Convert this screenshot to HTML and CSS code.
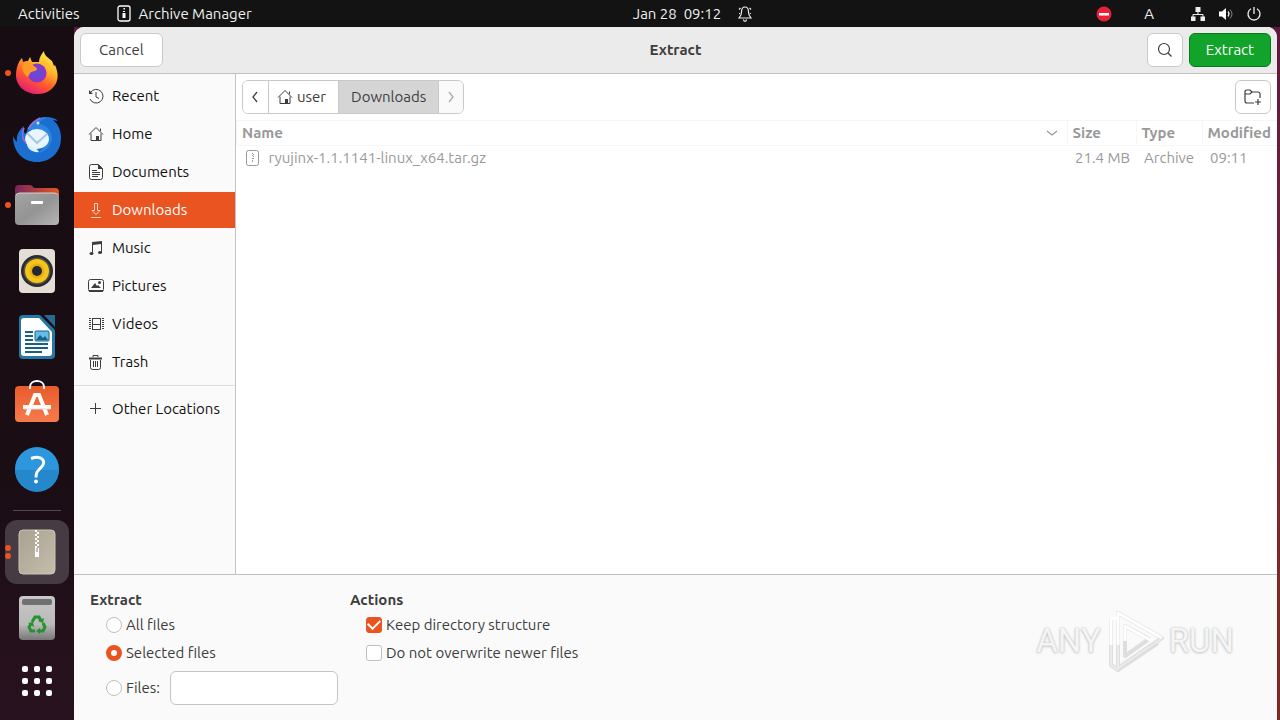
FILE: index.html
```
<!DOCTYPE html>
<html lang="en">
<head>
  <meta charset="UTF-8" />
  <meta name="viewport" content="width=device-width, initial-scale=1.0"/>
  <title>Extract</title>
  <link rel="stylesheet" href="styles.css">
</head>
<body>
  <svg class="defs" width="0" height="0" aria-hidden="true">
    <symbol id="home" viewBox="0 0 16 16">
      <path d="M1 8.5 8 1.5l7 7M3 7.500v7h10v-7M12.500 5V2.500" fill="none" stroke="currentColor"/>
      <path d="M8 10h3v5H8z" fill="currentColor"/>
    </symbol>
    <symbol id="archive" viewBox="0 0 16 16">
      <rect x="1.500" y=".5" width="12" height="15" rx="2" fill="none" stroke="currentColor"/>
      <path d="M7 3h1v1H7zM8 4h1v1H8zM7 5h1v1H7zM8 6h1v1H8zM7 8h2v1H7zM7 10h1v2H7z" fill="currentColor"/>
    </symbol>
  </svg>

  <header class="topbar">
    <div class="topbar-left">
      <button class="bar-btn">Activities</button>
      <button class="bar-btn app-menu">
        <svg width="16" height="18" viewBox="0 0 16 18"><rect x="2" y="1" width="12" height="15" rx="2" fill="none" stroke="#fff" stroke-width="1.300"/><path d="M7.500 3h1.500v1.500H7.500zM7 6h2v1H7zM6.500 8h3v5h-3z" fill="#fff"/></svg>
        Archive Manager
      </button>
    </div>
    <button class="bar-btn clock">
      <span>Jan 28&nbsp; 09:12</span>
      <svg width="16" height="18" viewBox="0 0 16 18" fill="none" stroke="#eee" stroke-width="1.200"><path d="M8 2C5 2 4.500 4 4.500 7 4.500 10 3.500 11 2 13h12c-1.500-2-2.500-3-2.500-6C11.500 4 11 2 8 2zM6.500 14.500c0 2.500 3 2.500 3 0M2 4.500 3.500 3M14 4.500 12.500 3M2 8.500h1M14 8.500h-1"/></svg>
    </button>
    <div class="topbar-right">
      <svg class="busy" width="16" height="16" viewBox="0 0 16 16"><circle cx="8" cy="8" r="7.500" fill="#e8203c"/><path d="M3 7h10v2.500H3z" fill="#fff"/></svg>
      <span class="layout">A</span>
      <svg width="16" height="16" viewBox="0 0 16 16" fill="#eee"><path d="M5.500 1h5v5h-5zM1 10.500h4.500V15H1zM10.500 10.500H15V15h-4.500z"/><path d="M8 6v2M3 11V8.500h10V11" fill="none" stroke="#eee"/></svg>
      <svg width="16" height="16" viewBox="0 0 16 16"><path d="M1 5.500h3L8 2v12l-4-3.500H1z" fill="#fff"/><path d="M10 5.500q2 2.500 0 5" fill="none" stroke="#eee" stroke-width="1.300"/><path d="M12 3.500q4 4.500 0 9" fill="none" stroke="#888"/></svg>
      <svg width="16" height="16" viewBox="0 0 16 16" fill="none" stroke="#eee" stroke-width="1.300"><path d="M8 1v7M5 2.800a6 6 0 1 0 6 0"/></svg>
    </div>
  </header>

  <div class="desktop">
    <nav class="dock" aria-label="Dock">
      <button class="dock-item one" aria-label="Firefox">
        <svg width="48" height="48" viewBox="0 0 48 48">
          <defs>
            <linearGradient id="fox" x1="0.800" y1="0" x2="0.250" y2="1"><stop offset="0" stop-color="#fff44f"/><stop offset=".35" stop-color="#ffb62b"/><stop offset=".65" stop-color="#ff5a2c"/><stop offset="1" stop-color="#e3167f"/></linearGradient>
            <radialGradient id="globe"><stop offset="0" stop-color="#5b50dd"/><stop offset="1" stop-color="#8e35c5"/></radialGradient>
          </defs>
          <path d="M6 13c1-2 2-3 3-4l1 4c2-1 4-1 5-1l2-4 2 5 7 0c0-4 2-7 5-11 0 5 5 7 8 10l2 5 1-1c3 7 4 14 0 20-4 6-10 9-17 9C12 45 3 37 3 26c0-5 1-9 3-13z" fill="url(#fox)"/>
          <path d="M25 14c7-1 12 5 10 13 3-4 3-9 0-13-3-3-7-3-10 0z" fill="#ffbd30"/>
          <circle cx="24" cy="24" r="9.500" fill="url(#globe)"/>
          <path d="M9 17c4-3 8-3 11-1 1 2 4 2 4 4 0 2-4 2-6 3-1 1-2 3-3 5-3-2-6-6-6-11z" fill="#ff9a28"/>
        </svg>
      </button>
      <button class="dock-item" aria-label="Thunderbird">
        <svg width="50" height="48" viewBox="0 0 50 48">
          <path d="M1 21c1 3 3 5 4 6-1-7 2-12 7-16-1 4 0 7 2 8C17 8 24 2 34 2c5 0 9 1 12 4l-5-1 4 4c3 5 4 9 4 14 0 14-10 24-24 24C11 47 1 37 1 21z" fill="#1b6fd0"/>
          <path d="M16 14C21 5 28 1 35 3c-5 1-8 4-9 6 8 0 14 7 14 15-2 8-7 13-14 14 5-3 6-6 6-10z" fill="#2c86e0"/>
          <ellipse cx="25" cy="24" rx="12" ry="10" fill="#e9f5ff"/>
          <path d="m15 18 10 10 10-9" fill="none" stroke="#a9c7df" stroke-width="2"/>
          <path d="M15 29c0 4 5 9 12 8l-3-4z" fill="#dff0ff"/>
          <path d="M12 13c-3 7-1 12 2 15M16 14c4-7 8-9 12-11" fill="none" stroke="#9b6ae0" stroke-width="1.500"/>
          <circle cx="26" cy="8" r="1.500" fill="#c9e6ff"/>
        </svg>
      </button>
      <button class="dock-item one" aria-label="Files">
        <svg width="48" height="48" viewBox="0 0 48 48">
          <defs><linearGradient id="tab"><stop offset="0" stop-color="#75285f"/><stop offset="1" stop-color="#e95420"/></linearGradient><linearGradient id="folder" x2="1" y2="1"><stop offset="0" stop-color="#a4a4a4"/><stop offset=".5" stop-color="#949494"/><stop offset="1" stop-color="#b5b5b5"/></linearGradient></defs>
          <path d="M2 8q0-4 4-4h11q2 0 4 3h21q4 0 4 4v20H2z" fill="url(#tab)"/>
          <rect x="2" y="12" width="44" height="32" rx="4" fill="url(#folder)"/>
          <path d="M3 14q1-2 4-2h34q3 0 4 2" fill="none" stroke="#d0d0d0"/>
          <rect x="18" y="20" width="12" height="3" rx="1" fill="#fff"/>
        </svg>
      </button>
      <button class="dock-item" aria-label="Rhythmbox">
        <svg width="48" height="48" viewBox="0 0 48 48"><rect x="6" y="2" width="36" height="44" rx="4" fill="#e4dfd5"/><circle cx="24" cy="24" r="16" fill="#282b32"/><circle cx="24" cy="24" r="13.500" fill="#5a5340"/><circle cx="24" cy="24" r="12" fill="#f6c51b"/><circle cx="24" cy="24" r="7.500" fill="#e5ae15"/><circle cx="24" cy="24" r="5" fill="#252830"/></svg>
      </button>
      <button class="dock-item" aria-label="LibreOffice Writer">
        <svg width="48" height="48" viewBox="0 0 48 48"><path d="M10 2h17l15 15v25q0 4-4 4H10q-4 0-4-4V6q0-4 4-4z" fill="#2478a5"/><path d="M31 2h11v12z" fill="#256b94"/><path d="M11 5h15l13 14v21q0 3-3 3H11q-3 0-3-3V8q0-3 3-3z" fill="#fff"/><path d="M12 19h8M12 23h8M12 27h8M12 31h23M12 35h23M12 39h17" stroke="#176086" stroke-width="2"/><rect x="22" y="18" width="14" height="10" rx="1" fill="#65bee8" stroke="#176086"/><path d="m23 27 4-5 3 3 2-2 3 4z" fill="#176086"/></svg>
      </button>
      <button class="dock-item" aria-label="Ubuntu Software">
        <svg width="48" height="48" viewBox="0 0 48 48"><defs><linearGradient id="bag" x2="0" y2="1"><stop offset="0" stop-color="#e95b2b"/><stop offset="1" stop-color="#f77b4d"/></linearGradient></defs><rect x="2" y="7" width="44" height="36" rx="4" fill="url(#bag)"/><path d="M17 10V8c0-8 14-8 14 0v2" fill="none" stroke="#fff" stroke-width="2"/><path d="m14 36 8-20h4l8 20M10 28h28" fill="none" stroke="#fff" stroke-width="4"/><path d="M11 30h26" stroke="#ddd"/></svg>
      </button>
      <button class="dock-item" aria-label="Help">
        <svg width="48" height="48" viewBox="0 0 48 48"><circle cx="24" cy="24" r="22" fill="#2d96dc"/><path d="M2 25h44a22 22 0 0 1-44 0z" fill="#2588cb"/><path d="M18 13.500c11-4 16 3 10 9-4 4-5 5-5 10" fill="none" stroke="#fff" stroke-width="3"/><circle cx="23" cy="36.500" r="2" fill="#fff"/></svg>
      </button>
      <hr class="dock-line">
      <button class="dock-item current" aria-label="Archive Manager">
        <svg width="48" height="48" viewBox="0 0 48 48"><defs><linearGradient id="zip" x2="1" y2="1"><stop offset="0" stop-color="#aaa190"/><stop offset="1" stop-color="#c5bead"/></linearGradient></defs><rect x="6" y="2" width="36" height="44" rx="4" fill="url(#zip)" stroke="#cbc3b3"/><path d="M23 2v18" stroke="#fff" stroke-width="2" stroke-dasharray="2 2"/><path d="M25 4v16" stroke="#fff" stroke-width="2" stroke-dasharray="2 2"/><path d="M22 20h4v9h-4z" fill="#fff"/><path d="M24 20v4" stroke="#777"/></svg>
      </button>
      <button class="dock-item" aria-label="Trash">
        <svg width="48" height="48" viewBox="0 0 48 48"><defs><linearGradient id="bin" x2="0" y2="1"><stop offset="0" stop-color="#c8c8c8"/><stop offset=".65" stop-color="#b9b9b9"/><stop offset="1" stop-color="#777"/></linearGradient></defs><rect x="6" y="2" width="36" height="44" rx="4" fill="url(#bin)"/><rect x="9" y="5" width="30" height="6" rx="2" fill="#707070"/><path d="m19 28 3-5h4l2 4M30 29l2 4-2 4h-4M22 37h-4l-2-4 2-3" fill="none" stroke="#26922d" stroke-width="3"/><path d="m25 27 5 2 1-5zM27 34v6l-4-3zM15 29l5-1 1 5z" fill="#26922d"/></svg>
      </button>
      <button class="dock-item apps" aria-label="Show Applications">
        <svg width="48" height="48" viewBox="0 0 48 48" fill="#fff"><rect x="9" y="9" width="6" height="6" rx="2"/><rect x="21" y="9" width="6" height="6" rx="2"/><rect x="33" y="9" width="6" height="6" rx="2"/><rect x="9" y="21" width="6" height="6" rx="2"/><rect x="21" y="21" width="6" height="6" rx="2"/><rect x="33" y="21" width="6" height="6" rx="2"/><rect x="9" y="33" width="6" height="6" rx="2"/><rect x="21" y="33" width="6" height="6" rx="2"/><rect x="33" y="33" width="6" height="6" rx="2"/></svg>
      </button>
    </nav>

    <main class="window">
      <header class="titlebar">
        <div><button class="btn">Cancel</button></div>
        <h1>Extract</h1>
        <div class="title-actions">
          <button class="btn icon-btn" aria-label="Search"><svg width="16" height="16" viewBox="0 0 16 16" fill="none" stroke="currentColor" stroke-width="1.200"><circle cx="7" cy="7" r="5.500"/><path d="m11 11 3.500 3.500"/></svg></button>
          <button class="btn extract-btn">Extract</button>
        </div>
      </header>

      <div class="chooser">
        <nav class="places" aria-label="Places">
          <a href="#"><svg width="16" height="16" viewBox="0 0 16 16" fill="none" stroke="currentColor"><path d="M2.500 4.500A6.800 6.800 0 1 1 2 11M8 4v5l3 1.500" /><path d="M1 2v4h4z" fill="currentColor" stroke="none"/></svg>Recent</a>
          <a href="#"><svg width="16" height="16"><use href="#home"/></svg>Home</a>
          <a href="#"><svg width="16" height="16" viewBox="0 0 16 16" fill="none" stroke="currentColor"><path d="M3.500 .5h7l4 4v9q0 2-2 2h-9q-2 0-2-2v-11q0-2 2-2zM4 6.500h5M4 8.500h8M4 10.500h8M4 12.500h6"/><path d="M10 0v5h5z" fill="currentColor" stroke="none"/></svg>Documents</a>
          <a href="#" class="active"><svg width="16" height="16" viewBox="0 0 16 16" fill="none" stroke="currentColor"><path d="M6.500 1.500h3v7h2.500L8 12.500l-4-4h2.500zM3 15.500h10"/></svg>Downloads</a>
          <a href="#"><svg width="16" height="16" viewBox="0 0 16 16" fill="currentColor"><path d="M4 2l10-1v12h-1V4L5 5v9H4z"/><ellipse cx="3.500" cy="13.500" rx="2" ry="1.500"/><ellipse cx="12" cy="12.500" rx="2" ry="1.500"/></svg>Music</a>
          <a href="#"><svg width="16" height="16" viewBox="0 0 16 16"><rect x=".5" y="1.500" width="15" height="12" rx="2" fill="none" stroke="currentColor"/><path d="m3 10 4-5 2 3 1-1 3 3zM1 12h14v2H1z" fill="currentColor"/><circle cx="11.500" cy="4.500" r="1.500" fill="currentColor"/></svg>Pictures</a>
          <a href="#"><svg width="16" height="16" viewBox="0 0 16 16" fill="none" stroke="currentColor"><path d="M4.500 2v12M12.500 2v12M4 2.500h9M4 8.500h9M4 13.500h9"/><path d="M2 2v12M15 2v12" stroke-width="2" stroke-dasharray="1 1"/></svg>Videos</a>
          <a href="#"><svg width="16" height="16" viewBox="0 0 16 16" fill="none" stroke="currentColor"><path d="M2.500 6v7.500q0 2 2 2h6q2 0 2-2V6M5.500 7v6M7.500 7v6M9.500 7v6M5 3V1.500h5V3"/><path d="M1 4.500h13" stroke-width="2"/></svg>Trash</a>
          <hr>
          <a href="#"><svg width="16" height="16" viewBox="0 0 16 16" fill="none" stroke="currentColor"><path d="M2 7.500h11M7.500 2v11"/></svg>Other Locations</a>
        </nav>

        <section class="files">
          <div class="pathbar">
            <div class="crumbs">
              <button aria-label="Back"><svg width="13" height="16" viewBox="0 0 13 16" fill="none" stroke="currentColor" stroke-width="1.300"><path d="M8 3 4 8l4 5"/></svg></button>
              <button><svg width="16" height="16"><use href="#home"/></svg>user</button>
              <button class="here">Downloads</button>
              <button aria-label="Forward" disabled><svg width="12" height="16" viewBox="0 0 12 16" fill="none" stroke="currentColor" stroke-width="1.300"><path d="m4 3 4 5-4 5"/></svg></button>
            </div>
            <button class="btn icon-btn" aria-label="Create Folder"><svg width="18" height="16" viewBox="0 0 18 16" fill="none" stroke="currentColor" stroke-width="1.200"><path d="M10 14H3q-2 0-2-2V3q0-2 2-2h3l2 2h6q2 0 2 2v4M1 5h5l2-2M11 13h6M14 10v6"/></svg></button>
          </div>
          <table class="list">
            <thead>
              <tr>
                <th class="name"><div>Name <svg width="12" height="8" viewBox="0 0 12 8" fill="none" stroke="currentColor" stroke-width="1.300"><path d="m1 2 5 4 5-4"/></svg></div></th>
                <th class="size">Size</th>
                <th class="type">Type</th>
                <th class="modified">Modified</th>
              </tr>
            </thead>
            <tbody>
              <tr>
                <td><div><svg width="16" height="16"><use href="#archive"/></svg>ryujinx-1.1.1141-linux_x64.tar.gz</div></td>
                <td>21.4 MB</td>
                <td>Archive</td>
                <td>09:11</td>
              </tr>
            </tbody>
          </table>
        </section>
      </div>

      <form class="options">
        <fieldset>
          <legend>Extract</legend>
          <label><input type="radio" name="range">All files</label>
          <label><input type="radio" name="range" checked>Selected files</label>
          <div class="files-row">
            <label><input type="radio" name="range">Files:</label>
            <input type="text" aria-label="Files">
          </div>
        </fieldset>
        <fieldset>
          <legend>Actions</legend>
          <label><input type="checkbox" checked>Keep directory structure</label>
          <label><input type="checkbox">Do not overwrite newer files</label>
        </fieldset>
      </form>
    </main>
  </div>

  <div class="watermark">
    <span>ANY</span>
    <svg width="60" height="64" viewBox="0 0 60 64" fill="none" stroke-linejoin="round"><path d="M13 4 57 29 13 59zM6 10v46l7 5 40-27M20 17v30l24-17z" stroke="#dedede" stroke-width="4"/><path d="M6 36V10l6-1M13 36V4l44 25M20 32V17l27 15" stroke="#fff" stroke-width="3"/><path d="M13 36v23l43-29M6 36v20l7 5" stroke="#ebebeb" stroke-width="2"/></svg>
    <span>RUN</span>
  </div>
</body>
</html>
```
FILE: styles.css
```
* {
  box-sizing: border-box;
}

body {
  margin: 0;
  min-height: 100vh;
  display: flex;
  flex-direction: column;
  background: linear-gradient(#5d183f, #7b2530 60%, #7b2b20);
  color: #3d3d3d;
  font-family: "Ubuntu", "Noto Sans", sans-serif;
  font-size: 15px;
  line-height: 20px;
}

button, input {
  font: inherit;
  color: inherit;
}

button {
  cursor: pointer;
}

svg {
  display: block;
  flex: none;
}

.defs {
  position: absolute;
}

/* top bar */
.topbar {
  height: 27px;
  display: grid;
  grid-template-columns: 1fr auto 1fr;
  align-items: center;
  background: #131313;
  color: #f0f0f0;
}

.topbar-left {
  display: flex;
  gap: 36px;
  padding-left: 18px;
}

.bar-btn {
  display: flex;
  align-items: center;
  gap: 7px;
  padding: 0;
  border: none;
  background: none;
}

.clock {
  gap: 16px;
  padding-left: 106px;
}

.topbar-right {
  display: flex;
  justify-content: flex-end;
  align-items: center;
  gap: 12px;
  padding-right: 18px;
}

.busy {
  margin-right: 20px;
}

.layout {
  margin-right: 24px;
}

/* dock */
.desktop {
  flex: 1;
  display: flex;
  padding-right: 3px;
}

.dock {
  width: 74px;
  display: flex;
  flex-direction: column;
  align-items: center;
  gap: 2px;
  padding-top: 14px;
  background: linear-gradient(#180c13, #1a0d14 65%, #29121f);
}

.dock-item {
  position: relative;
  width: 64px;
  height: 64px;
  display: flex;
  align-items: center;
  justify-content: center;
  padding: 0;
  border: none;
  border-radius: 12px;
  background: none;
}

.dock-item.current {
  background: #473b43;
}

.one::before, .current::before, .current::after {
  content: "";
  position: absolute;
  left: 0;
  top: 29px;
  width: 6px;
  height: 6px;
  border-radius: 50%;
  background: #e95420;
}

.current::before {
  top: 25px;
}

.current::after {
  top: 33px;
}

.dock-line {
  width: 48px;
  margin: 7px 0;
  border: none;
  border-top: 1px solid #514850;
}

.dock-item.apps {
  height: 58px;
}

/* window */
.window {
  flex: 1;
  min-width: 0;
  display: flex;
  flex-direction: column;
  border-radius: 10px 10px 0 0;
  background: #fafafa;
  overflow: hidden;
}

.titlebar {
  display: grid;
  grid-template-columns: 1fr auto 1fr;
  align-items: center;
  padding: 6px;
  border-bottom: 1px solid #c0c0c0;
  background: #ebebeb;
}

h1 {
  margin: 0;
  font-size: 15px;
}

.title-actions {
  display: flex;
  justify-content: flex-end;
  gap: 6px;
}

.btn {
  height: 34px;
  padding: 0 18px;
  border: 1px solid #c9c9c9;
  border-radius: 6px;
  background: #fff;
}

.icon-btn {
  width: 36px;
  display: grid;
  place-items: center;
  padding: 0;
}

.extract-btn {
  padding: 0 16px;
  border-color: #0b7a1d;
  background: #12a32b;
  color: #fff;
}

.chooser {
  flex: 1;
  display: flex;
}

.places {
  width: 162px;
  display: flex;
  flex-direction: column;
  gap: 2px;
  padding-top: 4px;
  border-right: 1px solid #c4c4c4;
}

.places a {
  height: 36px;
  display: flex;
  align-items: center;
  gap: 8px;
  padding-left: 14px;
  color: #111;
  text-decoration: none;
  white-space: nowrap;
}

.places svg {
  color: #3d3d3d;
}

.places .active {
  background: #e95420;
  color: #fff;
}

.places .active svg {
  color: #fbd5c7;
}

.places hr {
  width: 100%;
  margin: 3px 0;
  border: none;
  border-top: 1px solid #dedede;
}

.files {
  flex: 1;
  background: #fff;
}

.pathbar {
  display: flex;
  justify-content: space-between;
  padding: 6px;
}

.crumbs {
  display: flex;
  border: 1px solid #c9c9c9;
  border-radius: 6px;
  overflow: hidden;
}

.crumbs button {
  height: 32px;
  display: flex;
  align-items: center;
  gap: 4px;
  padding: 0 12px 0 8px;
  border: none;
  border-right: 1px solid #c9c9c9;
  background: #fff;
}

.crumbs button:first-child, .crumbs button:last-child {
  padding: 0 6px;
}

.crumbs button:last-child {
  border-right: none;
  background: #fafafa;
  color: #aaa;
}

.crumbs .here {
  padding: 0 12px;
  background: #d5d5d5;
}

.list {
  width: 100%;
  border-collapse: collapse;
  table-layout: fixed;
  color: #999;
}

.list th {
  height: 25px;
  padding: 0 0 0 5px;
  border: 1px solid #f6f6f6;
  border-width: 1px 0 1px 1px;
  text-align: left;
}

.list td {
  height: 24px;
  padding: 0 0 0 8px;
  white-space: nowrap;
}

.list th div, .list td div {
  display: flex;
  align-items: center;
}

.list th div {
  justify-content: space-between;
  padding-right: 9px;
}

.list td div {
  gap: 8px;
}

.size {
  width: 69px;
}

.type {
  width: 66px;
}

.modified {
  width: 75px;
}

/* extract options */
.options {
  display: flex;
  gap: 12px;
  height: 146px;
  padding: 15px 16px 0;
  border-top: 1px solid #c0c0c0;
}

fieldset {
  display: flex;
  flex-direction: column;
  gap: 8px;
  margin: 0;
  padding: 0 0 0 16px;
  border: none;
}

legend {
  margin: 0 0 5px -16px;
  padding: 0;
  font-weight: bold;
}

label {
  display: flex;
  align-items: center;
  gap: 4px;
}

input[type="radio"], input[type="checkbox"] {
  appearance: none;
  width: 16px;
  height: 16px;
  margin: 0;
  border: 1px solid #bfbfbf;
  border-radius: 50%;
  background: #fff;
}

input[type="checkbox"] {
  border-radius: 3px;
}

input[type="radio"]:checked {
  border: 5px solid #e95420;
}

input[type="checkbox"]:checked {
  display: grid;
  place-items: center;
  border-color: #e95420;
  background: #e95420;
}

input[type="checkbox"]:checked::before {
  content: "";
  width: 10px;
  height: 6px;
  margin-bottom: 4px;
  border: solid #fff;
  border-width: 0 0 2px 2px;
  transform: rotate(-45deg);
}

.files-row {
  display: flex;
  gap: 10px;
}

input[type="text"] {
  width: 168px;
  height: 34px;
  padding: 0 8px;
  border: 1px solid #c4c4c4;
  border-radius: 6px;
  background: #fff;
}

/* logo over the window corner */
.watermark {
  position: absolute;
  right: 46px;
  bottom: 47px;
  display: flex;
  align-items: center;
  gap: 4px;
  color: #f5f5f5;
  font-family: "Liberation Sans Narrow", "Roboto", sans-serif;
  font-size: 33px;
  line-height: 40px;
  text-shadow: 0 0 2px #bbb, 0 1px 3px #ccc;
  pointer-events: none;
}
```
